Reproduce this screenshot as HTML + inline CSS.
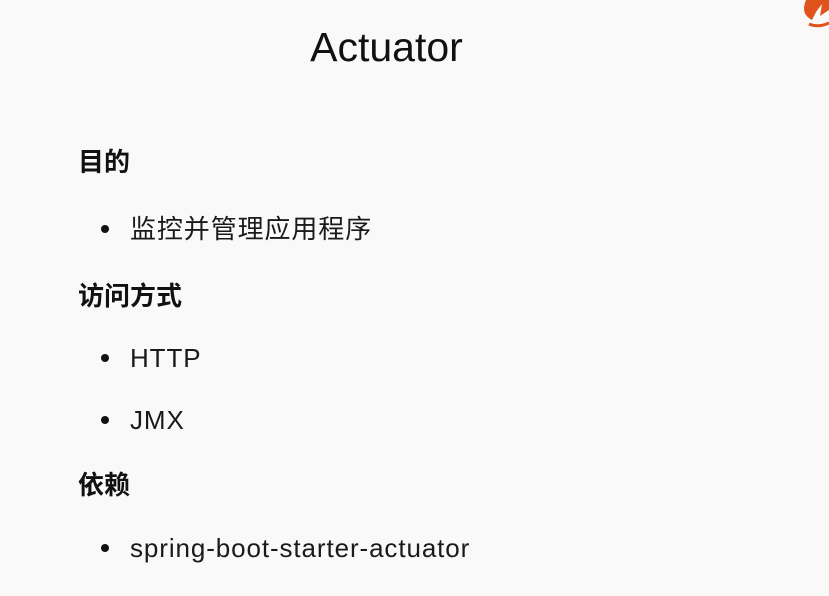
<!DOCTYPE html>
<html><head><meta charset="utf-8"><style>
html,body{margin:0;padding:0}
body{width:829px;height:596px;background:#f9f9f9;position:relative;overflow:hidden;font-family:"Liberation Sans","Noto Sans CJK SC",sans-serif;color:#111}
.t{position:absolute;white-space:nowrap;line-height:1}
.h{font-size:26px;font-weight:bold;left:78px}
.b{font-size:26px;left:130px;color:#1a1a1a;letter-spacing:0.9px}
.d{position:absolute;left:101px;width:8px;height:8px;border-radius:50%;background:#111}
</style></head><body>
<div class="t" style="left:0;width:773px;text-align:center;top:27px;font-size:41px;color:#111">Actuator</div>
<div class="t h" style="top:149px">目的</div>
<div class="d" style="top:225px"></div><div class="t b" style="top:216px">监控并管理应用程序</div>
<div class="t h" style="top:283px">访问方式</div>
<div class="d" style="top:354px"></div><div class="t b" style="top:345px">HTTP</div>
<div class="d" style="top:416px"></div><div class="t b" style="top:407px">JMX</div>
<div class="t h" style="top:472px">依赖</div>
<div class="d" style="top:544px"></div><div class="t b" style="top:535px">spring-boot-starter-actuator</div>
<svg style="position:absolute;left:796px;top:0" width="33" height="30" viewBox="0 0 33 30">
<path d="M10 0 Q4 14 16 20 L20 12 L26 4 L24 16 Q30 12 33 10 L33 0 Z" fill="#e0541c"/>
<path d="M13 24 Q22 28 33 23" stroke="#e0541c" stroke-width="3" fill="none"/>
</svg>
</body></html>
